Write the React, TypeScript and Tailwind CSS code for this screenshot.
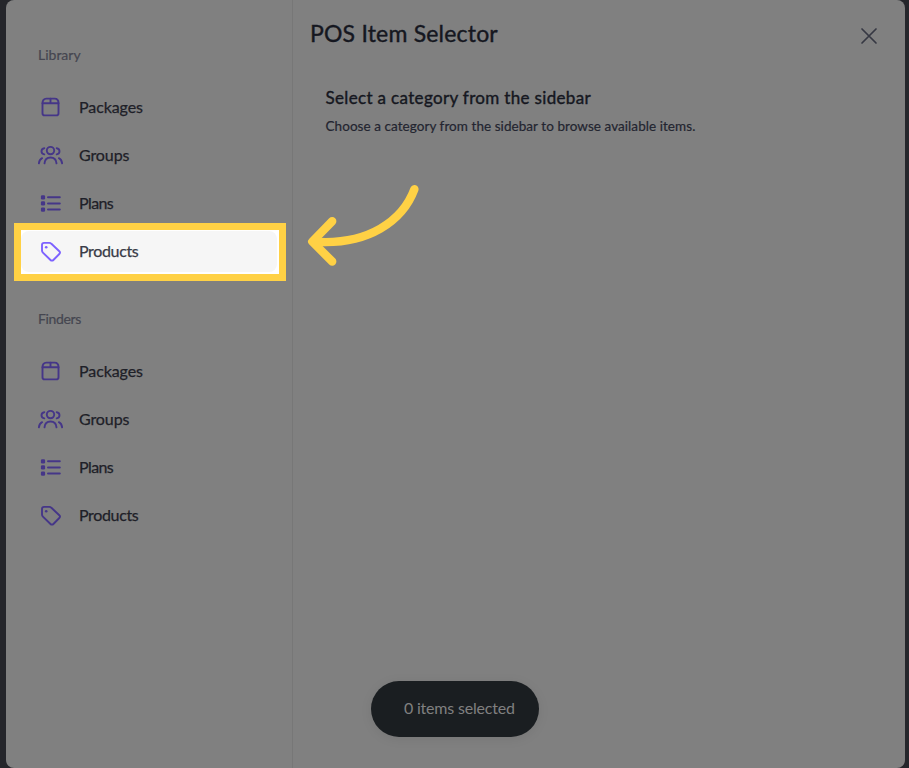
import React from 'react'

const PackageIcon = () => (
  <svg width="26" height="26" viewBox="0 0 26 26" fill="none" stroke="currentColor" strokeWidth="1.9" strokeLinecap="round" strokeLinejoin="round">
    <path d="M5.5 9.2c0-2.700 1.400-4.600 3.800-4.600h8.400c2.400 0 3.800 1.900 3.800 4.600v10a2.200 2.200 0 0 1-2.200 2.200H7.700a2.200 2.200 0 0 1-2.200-2.200V9.200z" />
    <path d="M5.500 9.200h16M13.500 4.600v4.600" />
  </svg>
)

const GroupIcon = () => (
  <svg width="26" height="26" viewBox="0 0 26 26" fill="none" stroke="currentColor" strokeWidth="1.9" strokeLinecap="round">
    <circle cx="13.500" cy="8.600" r="3.700" />
    <path d="M7.500 21.300c.3-3.600 2.600-5.800 6-5.800s5.700 2.200 6 5.800" />
    <path d="M7.300 6.200c-1.600.2-2.800 1.400-2.800 3.100s1.200 2.900 2.800 3.100M19.700 6.200c1.600.2 2.800 1.400 2.800 3.100s-1.200 2.900-2.800 3.100" />
    <path d="M1.900 21.300c.3-2.500 1.300-4.200 3.200-5.100M25.100 21.300c-.3-2.500-1.300-4.200-3.200-5.100" />
  </svg>
)

const ListIcon = () => (
  <svg width="26" height="26" viewBox="0 0 26 26" fill="none" stroke="currentColor" strokeWidth="2" strokeLinecap="round">
    <path d="M11 7.200h11.800M11 13.400h11.800M11 19.600h11.800" />
    <g fill="currentColor" stroke="none">
      <rect x="3.900" y="5.200" width="4.200" height="4.200" rx="1.200" />
      <rect x="3.900" y="11.300" width="4.200" height="4.200" rx="1.200" />
      <rect x="3.900" y="17.500" width="4.200" height="4.200" rx="1.200" />
    </g>
  </svg>
)

const TagIcon = () => (
  <svg width="26" height="26" viewBox="0 0 26 26" fill="none" stroke="currentColor" strokeWidth="1.900" strokeLinejoin="round">
    <path d="M7.100 4.900h5.200a3 3 0 0 1 2.100.9l7.900 7.400a2 2 0 0 1 0 2.800l-5.900 6a2 2 0 0 1-2.900 0l-7.600-7.400a3 3 0 0 1-.9-2.100V7.100a2.200 2.200 0 0 1 2.100-2.200z" />
    <circle cx="9.200" cy="9.200" r="1.300" fill="currentColor" stroke="none" />
  </svg>
)

const items = [
  { label: 'Packages', icon: PackageIcon, tracking: 'tracking-[-0.08px]' },
  { label: 'Groups', icon: GroupIcon, tracking: 'tracking-[-0.1px]' },
  { label: 'Plans', icon: ListIcon, tracking: 'tracking-[-0.6px]' },
  { label: 'Products', icon: TagIcon, tracking: 'tracking-[-0.35px]' },
]

const Section = ({ title, selected }: { title: string; selected?: string }) => (
  <div>
    <h3 className={`pl-8 h-5 leading-5 text-[14px] text-[#454650] [-webkit-text-stroke:0.2px_currentColor] ${selected ? 'tracking-[0px]' : 'tracking-[-0.35px]'}`}>{title}</h3>
    <ul className="mt-[18px]">
      {items.map(({ label, icon: Icon, tracking }) => {
        const active = label === selected
        return (
          <li key={label} className="relative h-12">
            {active && (
              <div className="absolute left-2 -top-1 w-[272px] h-[58px] border-[7px] border-[#ffd145] bg-white">
                <div className="mt-px h-[41px] w-[256px] rounded-lg bg-[#f6f6f6]" />
              </div>
            )}
            <a className="relative flex h-full items-center pl-[31px]" href="#">
              <span className={active ? 'text-[#7d62ff]' : 'text-[#453688]'}>
                <Icon />
              </span>
              <span className={`ml-4 text-[16px] [-webkit-text-stroke:0.25px_currentColor] ${tracking} ${active ? 'text-[#393b47]' : 'text-[#1e2028]'}`}>{label}</span>
            </a>
          </li>
        )
      })}
    </ul>
  </div>
)

const App = () => {
  return (
    <div className="relative h-[768px] w-[909px] overflow-hidden bg-[#25262b] pl-[6px] pr-1 font-['Lato',sans-serif]">
      <div className="flex h-full rounded-lg bg-[#808080] overflow-hidden">
        <aside className="w-[287px] shrink-0 border-r border-[#777777] pt-[45px] flex flex-col gap-[34px]">
          <Section title="Library" selected="Products" />
          <Section title="Finders" />
        </aside>
        <main className="relative flex-1">
          <header className="flex items-center justify-between pl-[17px] pr-[27px] h-[70px]">
            <h1 className="-mt-[3px] text-[23px] tracking-[0.2px] text-[#151720] whitespace-nowrap [-webkit-text-stroke:0.4px_currentColor]">POS Item Selector</h1>
            <svg className="mt-0.5" width="18" height="18" viewBox="0 0 18 18" fill="none" stroke="#363843" strokeWidth="1.700" strokeLinecap="round">
              <path d="M2 2l14 14M16 2L2 16" />
            </svg>
          </header>
          <div className="pl-[32.500px] pt-4">
            <h2 className="text-[17px] leading-6 tracking-[0.34px] text-[#151720] [-webkit-text-stroke:0.4px_currentColor]">Select a category from the sidebar</h2>
            <p className="mt-1 text-[13.500px] leading-6 tracking-[0.06px] text-[#232530] [-webkit-text-stroke:0.2px_currentColor]">Choose a category from the sidebar to browse available items.</p>
          </div>
          <div className="absolute left-[78px] top-[681px] flex h-14 w-[168px] items-center rounded-full bg-[#1a1e21] pl-[33px] pb-0.5 text-[16px] tracking-[-0.2px] text-[#808080] shadow-[0_2px_12px_rgba(0,0,0,0.08)]">
            0 items selected
          </div>
        </main>
      </div>
      <svg className="absolute left-[300px] top-[180px]" width="125" height="90" viewBox="300 180 125 90" fill="none" stroke="#ffd145" strokeWidth="8.400" strokeLinecap="round" strokeLinejoin="round">
        <path d="M414.400 189.300C403 220 369 246 313 241.600" />
        <path d="M332.200 221.200 312.300 241.600 332.200 261.500" />
      </svg>
    </div>
  )
}

export default App
